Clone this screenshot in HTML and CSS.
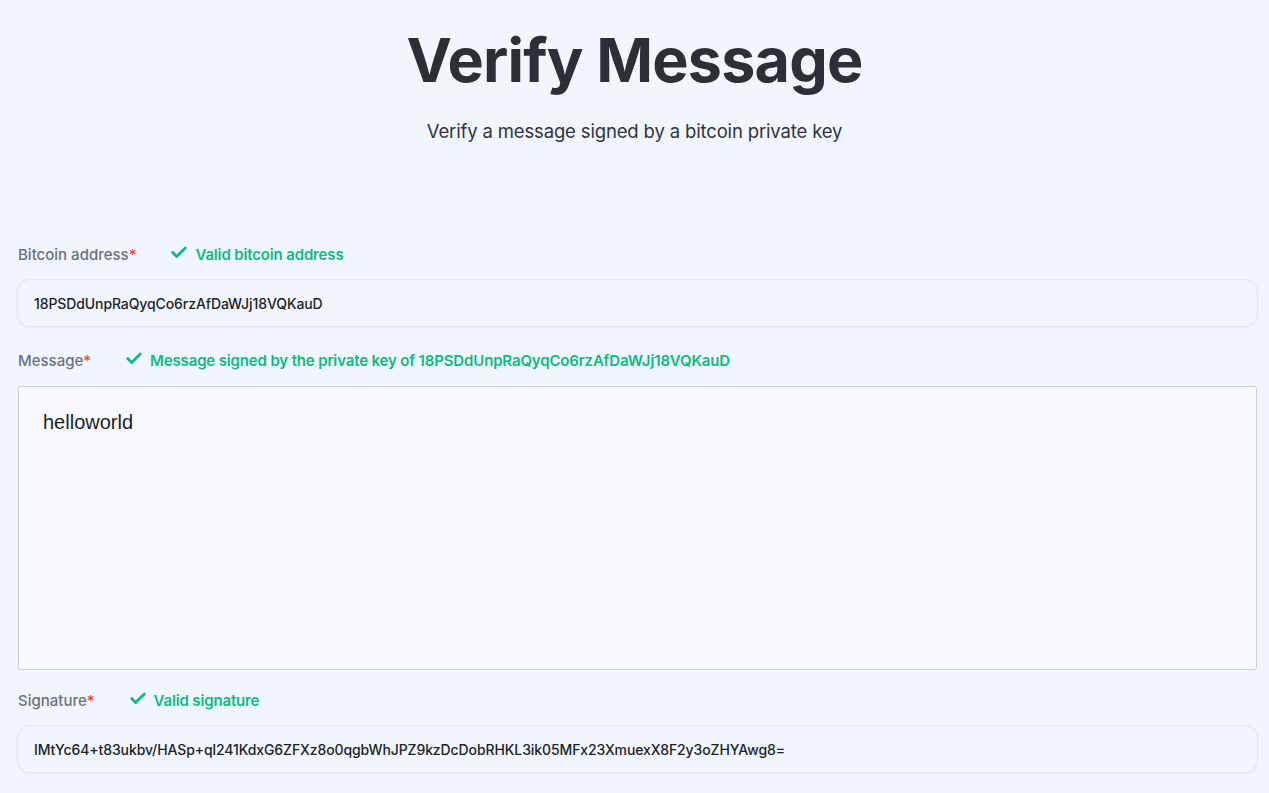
FILE: index.html
```html
<!DOCTYPE html>
<html lang="en">
<head>
<meta charset="utf-8">
<title>Verify Message</title>
<link rel="stylesheet" href="styles.css">
</head>
<body>
<header class="hero">
  <h1 class="title">Verify Message</h1>
  <p class="subtitle">Verify a message signed by a bitcoin private key</p>
</header>
<main class="form">
  <div class="field">
    <div class="label-row">
      <span class="label">Bitcoin address<span class="req">*</span></span>
      <span class="status"><svg class="check" viewBox="0 0 20 20"><path d="M3 10.5l4.5 4.5L17 5.5"/></svg>Valid bitcoin address</span>
    </div>
    <div class="input">18PSDdUnpRaQyqCo6rzAfDaWJj18VQKauD</div>
  </div>
  <div class="field">
    <div class="label-row">
      <span class="label">Message<span class="req">*</span></span>
      <span class="status"><svg class="check" viewBox="0 0 20 20"><path d="M3 10.5l4.5 4.5L17 5.5"/></svg>Message signed by the private key of 18PSDdUnpRaQyqCo6rzAfDaWJj18VQKauD</span>
    </div>
    <div class="textarea">helloworld</div>
  </div>
  <div class="field">
    <div class="label-row">
      <span class="label">Signature<span class="req">*</span></span>
      <span class="status"><svg class="check" viewBox="0 0 20 20"><path d="M3 10.5l4.5 4.5L17 5.5"/></svg>Valid signature</span>
    </div>
    <div class="input">IMtYc64+t83ukbv/HASp+ql241KdxG6ZFXz8o0qgbWhJPZ9kzDcDobRHKL3ik05MFx23XmuexX8F2y3oZHYAwg8=</div>
  </div>
</main>
</body>
</html>
```
FILE: styles.css
```css
* { box-sizing: border-box; }
html, body { margin: 0; padding: 0; }
body {
  background: #f1f5fd;
  font-family: Inter, "Noto Sans", sans-serif;
  color: #2a2f38;
}
.hero {
  text-align: center;
  padding-top: 22px;
}
.title {
  margin: 0;
  font-size: 61px;
  font-weight: 700;
  letter-spacing: -0.8px;
  line-height: 76px;
  color: #2a2f38;
}
.subtitle {
  margin: 20px 0 0;
  font-size: 18.5px;
  letter-spacing: -0.15px;
  line-height: 26px;
  color: #2f3440;
}
.form {
  padding: 98px 12px 0 18px;
  display: flex;
  flex-direction: column;
  gap: 18px;
}
.field {
  display: flex;
  flex-direction: column;
  gap: 14px;
}
.label-row {
  display: flex;
  align-items: center;
  gap: 34px;
  height: 24px;
}
.label {
  font-size: 15px;
  font-weight: 500;
  color: #6b7180;
}
.req { color: #ef4444; }
.status {
  display: flex;
  align-items: center;
  gap: 7px;
  font-size: 15px;
  font-weight: 600;
  letter-spacing: -0.15px;
  color: #10b981;
}
.check {
  width: 18px;
  height: 18px;
  fill: none;
  stroke: #10b981;
  stroke-width: 3.2;
  stroke-linecap: round;
  stroke-linejoin: round;
  margin-top: -4px;
}
.input {
  height: 46px;
  margin-bottom: 4px;
  border-radius: 12px;
  background: #f1f5fd;
  box-shadow: 0 0 0 1px #e2e6ee, 0 1px 3px rgba(20, 30, 60, 0.08);
  padding: 0 16px;
  display: flex;
  align-items: center;
  font-size: 14px;
  font-weight: 500;
  letter-spacing: -0.1px;
  color: #1b1f27;
}
.textarea {
  height: 284px;
  background: #f8faff;
  border: 1px solid #c9cdd5;
  border-radius: 3px;
  padding: 24px 24px;
  font-family: "Liberation Sans", Arial, sans-serif;
  font-size: 20px;
  color: #1b1f27;
}
```
